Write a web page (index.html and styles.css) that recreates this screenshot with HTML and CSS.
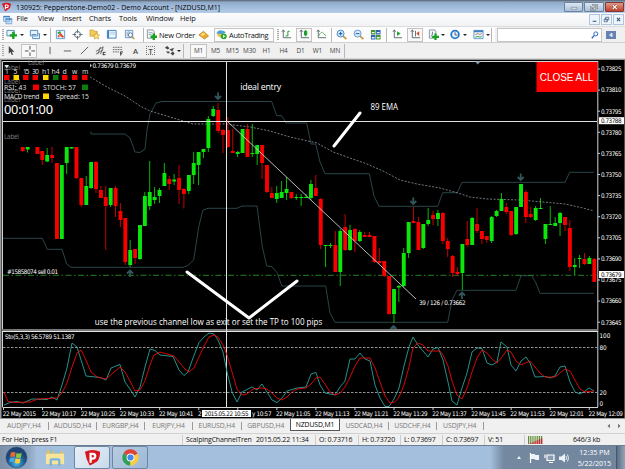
FILE: index.html
```html
<!DOCTYPE html>
<html lang="en">
<head>
  <meta charset="UTF-8">
  <title>130925: Pepperstone-Demo02 - Demo Account - [NZDUSD,M1]</title>
  <link rel="stylesheet" href="styles.css">
</head>
<body>
  <div class="window">
    <header class="title-bar">
      <svg class="app-icon" viewBox="0 0 10 10"><path fill="#d8141f" d="M0 1.5Q5-.8 10 1.5L8.8 6 3.5 10Z"/><path fill="none" stroke="#fff" stroke-width="1.3" d="M3.8 7.5V2.8h1.7q1.6.1 1.4 1.5T5.200 5.700H4"/></svg>
      <svg class="title" viewBox="0 0 240 13"><text x="0" y="9.500" textLength="204" lengthAdjust="spacingAndGlyphs">130925: Pepperstone-Demo02 - Demo Account - [NZDUSD,M1]</text></svg>
      <div class="window-buttons">
        <svg viewBox="0 0 18 10"><path fill="#fff" stroke="#4d5b6b" stroke-width=".6" d="M6 5.500h7v2H6z"/></svg>
        <svg viewBox="0 0 18 10"><path fill="none" stroke="#4d5b6b" stroke-width="1.800" d="M8 2.500h5v4H8zM5.500 4.500h5v4h-5z"/><path fill="none" stroke="#fff" stroke-width=".8" d="M8 2.500h5v4H8zM5.500 4.500h5v4h-5z"/></svg>
        <svg class="close" viewBox="0 0 18 10"><path stroke="#7a2a20" stroke-width="2.600" d="M6.500 2.500l5 5m0-5l-5 5"/><path stroke="#fff" stroke-width="1.500" d="M6.500 2.500l5 5m0-5l-5 5"/></svg>
      </div>
    </header>

    <nav class="menu-bar">
      <svg viewBox="0 0 12 12"><path fill="#cfe3f7" stroke="#6f9fd0" d="M.8 1.500h7v6h-7zM3.500 4.500h7v6h-7z"/><path stroke="#4682c2" stroke-width="1.500" d="M.5 1.800h7.500M3 4.800h8"/></svg>
      <span>File</span><span>View</span><span>Insert</span><span>Charts</span><span>Tools</span><span>Window</span><span>Help</span>
      <div class="child-buttons">
        <svg viewBox="0 0 10 10"><path stroke="#36587e" stroke-width="1.200" d="M3 7h4"/></svg>
        <svg viewBox="0 0 10 10"><path fill="none" stroke="#36587e" stroke-width=".8" d="M4 2.500h3.500v3H4zM2.500 4.500H6v3H2.500z"/></svg>
        <svg viewBox="0 0 10 10"><path stroke="#36587e" stroke-width="1.200" d="M3.300 3.300l3.500 3.500m0-3.500l-3.500 3.500"/></svg>
      </div>
    </nav>

    <div class="toolbar main-tools">
      <i class="grip"></i>
      <svg viewBox="0 0 12 12"><path fill="#eef6fd" stroke="#4a86b8" d="M1 1.500h8v6H1z"/><path stroke="#18a021" stroke-width="2.600" d="M4 7h8M8 3v8"/></svg>
      <i class="caret"></i>
      <svg viewBox="0 0 12 12"><path fill="#e6f2fc" stroke="#4a86b8" d="M1.500 1.500h8v6h-8zM4 8v2.500h7.500V5H10"/><path stroke="#4a86b8" d="M3 6h5"/></svg>
      <i class="caret"></i>
      <i class="divider"></i>
      <svg viewBox="0 0 12 12"><path fill="#edf6fe" stroke="#5c97cf" d="M1.500 1.500h9v9h-9z"/><path stroke="#26a52c" stroke-width="2" d="M3 5l3-2"/><path stroke="#dc4a2a" stroke-width="2.200" d="M5 5l4 4M3 8h2"/></svg>
      <svg viewBox="0 0 12 12"><circle cx="6" cy="6" r="3.300" fill="none" stroke="#5b656e"/><path stroke="#5b656e" d="M6 .5v4M6 7.500v4M.5 6h4M7.500 6h4"/></svg>
      <svg viewBox="0 0 12 12"><path fill="#f5cb56" stroke="#b98d29" stroke-width=".6" d="M1 1h4l1 1.500h3V8H1z"/><path fill="#ffe27a" stroke="#b98d29" stroke-width=".6" d="M8 4l1.200 2.300 2.500.3-1.800 1.800.4 2.600L8 9.800 5.700 11l.4-2.600-1.800-1.800 2.500-.3z"/></svg>
      <svg viewBox="0 0 12 12"><path fill="#eff7fe" stroke="#3f7fc0" d="M1.500 1.500h9.500v8.500H1.500z"/><path stroke="#3f7fc0" stroke-width="1.800" d="M2.500 2v8"/><path stroke="#a8c8e6" d="M4.500 3.500H10M4.500 5.500H10"/></svg>
      <svg viewBox="0 0 12 12"><path fill="#e7f1fa" stroke="#6b95bd" d="M1.500 1.500h8v8h-8z"/><path stroke="#8aa7c0" d="M3.500 3v5M5.500 2v4"/><circle cx="7" cy="6.500" r="2.300" fill="#fff" stroke="#55789b"/><path stroke="#c7973c" stroke-width="1.500" d="M8.800 8.300l2.500 2.700"/></svg>
      <i class="divider"></i>
      <span class="labelled new-order"><svg viewBox="0 0 12 12"><path fill="#f4f6f8" stroke="#8293a4" d="M1.500 1h6l1.500 2v7H1.500z"/><path stroke="#8fa6ba" d="M3 4h4M3 6h3"/><path stroke="#18a021" stroke-width="2.600" d="M5 8.500h7M8.500 5v7"/></svg>New Order</span>
      <svg viewBox="0 0 12 12"><path fill="#e9ac28" stroke="#a97514" stroke-width=".7" d="M1 6.500l5-4 5.500 5L7 11z"/><path fill="#ffe086" d="M2.800 6.200L6 3.700l2 2-3.500 2z"/></svg>
      <span class="labelled auto-trading"><svg viewBox="0 0 12 12"><path fill="#edc145" d="M1 5l4-1 5 2-3 4-5-2z"/><path fill="#4aa0d8" d="M.5 5Q2 1 6 1.500T10.500 4Q7 6 .5 5z"/><circle cx="8.500" cy="8" r="3.200" fill="#22a82a"/><path fill="#fff" d="M7.600 6.300v3.400L10.300 8z"/></svg>AutoTrading</span>
      <i class="grip"></i>
      <svg viewBox="0 0 12 12"><path fill="none" stroke="#59656c" d="M2.500 1v8.500H11M1 3l1.500-2L4 3"/><path fill="none" stroke="#159528" d="M5 7.500h2.500V2.500H9.500"/></svg>
      <span class="pressed"><svg viewBox="0 0 12 12"><path fill="none" stroke="#59656c" d="M2.500 1v8.500H11M1 3l1.500-2L4 3"/><path fill="#3bd04b" stroke="#159528" d="M6 2.500h2.500v4H6zM7.200 1v7"/></svg></span>
      <svg viewBox="0 0 12 12"><path fill="none" stroke="#59656c" d="M2.500 1v8.500H11M1 3l1.500-2L4 3"/><path fill="none" stroke="#59a865" d="M3 7.500q3-6 5-3T11 7"/></svg>
      <i class="divider"></i>
      <svg viewBox="0 0 12 12"><path stroke="#c89b3a" stroke-width="2" d="M7.800 7.800L11.300 11"/><circle cx="5" cy="5" r="3.800" fill="#d8ecfb" stroke="#3f7fc0"/><path stroke="#2e6fb4" stroke-width="1.200" d="M3 5h4M5 3v4"/></svg>
      <svg viewBox="0 0 12 12"><path stroke="#c89b3a" stroke-width="2" d="M7.800 7.800L11.300 11"/><circle cx="5" cy="5" r="3.800" fill="#d8ecfb" stroke="#5a96cf"/><path stroke="#2e6fb4" stroke-width="1.200" d="M3 5h4"/></svg>
      <svg viewBox="0 0 12 12"><path fill="#47952c" d="M1 1h5v5H1zM6.500 6.500h5v5h-5z"/><path fill="#2c66bb" d="M6.500 1h5v5h-5zM1 6.500h5v5H1z"/><path stroke="#e9f3ff" stroke-width="1.500" d="M2 4h3M7.500 4h3M2 9.500h3M7.500 9.500h3"/></svg>
      <i class="divider"></i>
      <svg viewBox="0 0 12 12"><path fill="none" stroke="#59656c" d="M2.500 1v8.500H11M1 3l1.500-2L4 3"/><path fill="#22a432" d="M5.500 2.500v5l4-2.500z"/></svg>
      <span class="pressed"><svg viewBox="0 0 12 12"><path fill="none" stroke="#59656c" d="M2.500 1v8.500H11M1 3l1.500-2L4 3M6 2v6"/><path fill="#d64525" d="M7 5l3-2.500v5z"/></svg></span>
      <svg viewBox="0 0 12 12"><path fill="#f4f6f8" stroke="#8293a4" d="M1.500 1h6l1 1.500V10h-7z"/><path fill="none" stroke="#5b7590" d="M3 8q2 0 2-5"/><path stroke="#18a021" stroke-width="2.400" d="M4.500 8.500H12M8.200 5v7"/></svg>
      <i class="caret"></i>
      <svg viewBox="0 0 12 12"><circle cx="5.500" cy="6" r="4.200" fill="#e7f4ff" stroke="#2b78c6" stroke-width="2"/><path fill="none" stroke="#365a80" d="M5.500 3.500V6.500H8"/></svg>
      <i class="caret"></i>
      <svg viewBox="0 0 12 12"><path fill="#eaf5ff" stroke="#5c97cf" d="M1 1.500h10v9H1z"/><path stroke="#3f7fc0" stroke-width="2" d="M1 2.500h10"/><path fill="none" stroke="#c37c4a" d="M2.500 6l3-1 2 1 2-1"/><path fill="none" stroke="#36a044" d="M2.500 9l3-1 2 1 2-1"/></svg>
      <i class="caret"></i>
      <i class="divider"></i>
      <span class="search"><svg viewBox="0 0 10 10"><circle cx="6" cy="3.600" r="2.500" fill="none" stroke="#2f66bd" stroke-width="1.200"/><path stroke="#2f66bd" stroke-width="1.700" d="M4.300 5.500L1 9"/></svg></span>
      <span class="chat">4</span>
    </div>

    <div class="toolbar draw-tools">
      <i class="grip"></i>
      <svg viewBox="0 0 12 12"><path fill="#444" d="M3 1v8.500l2-1.800L6.300 11l1.500-.7L6.400 7.300h2.800z"/></svg>
      <span class="pressed"><svg viewBox="0 0 12 12"><path stroke="#444" d="M6.500 1v4M6.500 8v4M1 6.500h4M8 6.500h4"/></svg></span>
      <svg viewBox="0 0 12 12"><path stroke="#555" d="M5.500 2v8"/></svg>
      <svg viewBox="0 0 12 12"><path stroke="#555" d="M2 6.500h8"/></svg>
      <svg viewBox="0 0 12 12"><path stroke="#555" d="M2 10l8-8"/></svg>
      <svg viewBox="0 0 12 12"><path stroke="#555" stroke-width=".9" d="M1 7l8-5M1 10l8-5M3 10l3-8M6 10l3-8"/><path stroke="#333" d="M8.500 8h3M8.500 10.500h3M9 8v3"/></svg>
      <svg viewBox="0 0 12 12"><path stroke="#555" stroke-dasharray="1.200 .6" d="M1 2.500h10M1 5h10M1 7.500h7"/><path stroke="#333" d="M9 7.500h3M9 9.500h2M9.500 7.500v4"/></svg>
      <b>A</b>
      <b class="boxed">T</b>
      <svg viewBox="0 0 12 12"><path fill="#444" d="M1 3l2.500-2L6 3.500 4 5zM7 9l3-2 1.500 2.500-2 2zM6 5l5-2-2 4zM2 7h4v2H4z"/></svg>
      <i class="caret"></i>
      <i class="divider"></i>
      <em class="active">M1</em><em>M5</em><em>M15</em><em>M30</em><em>H1</em><em>H4</em><em>D1</em><em>W1</em><em>MN</em>
      <i class="divider"></i>
    </div>

    <svg class="chart" viewBox="0 59 625 360">
      <rect class="frame" x="0" y="59" width="625" height="360"/>
      <rect x="1.500" y="60" width="623" height="358"/>
      <path class="border" d="M2.500 407V61.500H598M597.800 61v346M2.500 407.500H598"/>
      <path stroke="#777" stroke-width="2" d="M2 330h596"/>
      <path stroke="#e4e4e4" stroke-width="1" d="M2 331.500h596"/>

      <path class="channel" d="M90.700 131.500l.3 2.500H125l5 4 5 14 5 .5 5-3.500 2-19 3-16 6-11 6-1.500H271.700l5 14.200h5l4.400 7.300H306.700l4.300 21h4.700l4.300 18 5 11.700H369.300l4.700 22.300 5 10.300H437.700l5-13.600H457.300l4.700-10.400H565l4.700-10H594"/>
      <path class="channel" d="M3 238.300H42.300l5 11H62l4.700 14.700 4.300 3.300H183l5-1.800 5.700-5.500 5-33.300 4.300-16.700 5-1.700H237l5-2.300H257l5.300 40.700 4.400 19.300 5.300.7 5 6 5 13.300H325.700l4.300 27 5 9.300H447.700l4.300-22.300 5-9.700H516l5-14.600H531.700l4.300 7.300 4 10.300H594"/>
      <polyline class="ema" points="90,77 107,87 125,96 140,106 150,111 170,117 193,124 225,124 250,127 270,131 290,137 317,143 333,152 350,158 367,164 383,171 400,180 417,184 440,188 458,193 470,197 487,199 520,200 543,202 565,204 583,208 594,211"/>
      <path stroke="#238023" stroke-dasharray="6 2.500 1.500 2.500" d="M3 275.300H597"/>

      <g id="candles"></g>

      <g id="arrows"></g>

      <path class="cross" d="M3 121.500H597M226.500 62V407"/>
      <path stroke="#ccc" stroke-width=".9" d="M227 121L416 299"/>
      <path class="marker" d="M360 113L334 146M187 272L249 318M249 318L297 281"/>
      <path fill="#7f93a5" d="M475 61.500h5.500l-2.700 3z"/>

      <rect x="536.500" y="62" width="61" height="30" fill="#fe0000"/>
      <text class="close-all" x="539.800" y="80.600" textLength="53.500">CLOSE ALL</text>

      <g class="dim">
        <text x="4" y="70">Label</text><text x="28" y="65" fill="#aaa">Label</text>
        <text x="4" y="84">Label</text><text x="4" y="93">Label</text>
        <text x="4" y="102">Label</text><text x="4" y="139" textLength="15">Label</text>
      </g>
      <path fill="#e8e8e8" d="M4.500 65h4.500l-2.200 3.500z"/>
      <text class="small" x="92.500" y="68.300" textLength="43.500">0.73679 0.73679</text>
      <path fill="#eee" d="M90.200 63.500l1.500 2-1.500 2z"/>
      <g class="panel">
        <text x="5" y="73.600">1</text><text x="13.500" y="73.600">5</text><text x="23" y="73.600" textLength="6.500">15</text>
        <text x="32" y="73.600" textLength="7">30</text><text x="42" y="73.600">h1</text><text x="51.500" y="73.600">h4</text>
        <text x="62.500" y="73.600">d</text><text x="72" y="73.600">w</text><text x="82" y="73.600">m</text>
        <text x="4" y="90" textLength="22.500">RSI: 43</text><text x="43" y="90" textLength="33">STOCH: 57</text>
        <text x="4" y="99.200" textLength="35.500">MACD trend</text><text x="56" y="99.200" textLength="33">Spread: 15</text>
        <text class="timer" x="4" y="114.300" textLength="49">00:01:00</text>
      </g>
      <path fill="#f40000" d="M4 75h5.500v5H4zM23 75h5.500v5H23zM32.500 75H38v5h-5.500zM62 75h5.500v5H62zM72 75h5.500v5H72zM82 75h5.500v5H82zM33 84.500h6v5.500h-6z"/>
      <path fill="#ffd800" d="M13.500 75H19v5h-5.500zM43 75h5.500v5H43zM43 93.500h6V99h-6z"/>
      <path fill="#0a7d0a" d="M53 75h5.500v5H53zM82 84.500h6v5.500h-6z"/>

      <text class="note" x="240.300" y="90" textLength="41">ideal entry</text>
      <text class="note" x="370.500" y="110.200" textLength="27.500" lengthAdjust="spacingAndGlyphs">89 EMA</text>
      <text class="note" x="94.800" y="325.200" textLength="227.500" lengthAdjust="spacingAndGlyphs">use the previous channel low as exit or set the TP to 100 pips</text>
      <text class="small" x="419" y="305" textLength="46.500">39 / 126 / 0.73662</text>
      <text class="small" x="7" y="273.800" textLength="51">#15858074 sell 0.01</text>
      <text class="small" x="5" y="339" textLength="69.500">Sto(5,3,3) 56.5789 51.1387</text>

      <path class="level" d="M3 347.500H597M3 392.500H597"/>
      <polyline class="stoch-main" points="4,405 10,402.500 17,401.500 23,403 32,399 47,399.500 52,397 57,400 62,385 67,368 72,343 77,347 82,363 86,376 100,377.500 106,380 111,368 116,366 120,364.500 125,382 130,389 135,397 140,387 145,367 150,349 155,350.500 160,355 173,356.500 179,370 184,375.500 188,372 193,358 199,342.500 204,337 209,333 214,334 218,340 223,352 227,372 232,392 237,402 242,392 252,387 257,390 262,384 267,392 272,400 277,402.500 282,398 287,391 297,388 306,387 311,374 316,372.500 320,385 325,393 335,395 340,387 345,381 350,359 355,359 360,353 365,359 370,361 375,385 380,398 385,406.500 389,406.500 394,399 399,388 404,366 409,347 413,337 418,345 428,357 433,349 438,347.500 443,360 448,382 452,401 457,405 462,388 467,373 472,352 477,348 482,348.500 487,363 492,365 497,362 501,342 507,347 511,365 516,371 521,361 526,357 530,363 535,377 545,376.500 550,378 555,376 560,367 565,366 570,382 575,392 580,394 585,391 589,388 594,391"/>
      <polyline class="stoch-signal" points="4,392 8,401.500 15,402.500 30,402 38,399 57,398 62,393 67,383 72,367 77,353 81,350 86,360 91,372 97,377 106,379 113,373 120,367 125,372 130,381 135,391 140,390 145,381 150,365 154,355 160,352 174,356 179,362 185,369 189,372 194,368 199,357 204,346 209,337 214,335 218,337 223,345 227,355 232,372 237,389 242,395 247,394 253,389 262,388 267,389 272,393 277,398 282,400 287,397 292,392 297,389 306,388 311,384 316,378 320,377 325,384 330,392 335,395 340,393 345,387 350,377 355,366 360,358 370,358 375,368 380,382 385,396 390,403 395,402 399,397 404,385 409,367 413,348 418,343 423,345 428,351 440,351 443,355 448,366 452,381 457,395 462,399 467,388 472,372 477,358 482,350 487,353 492,359 497,363 502,357 507,350 511,352 516,361 521,365 530,361 535,367 540,373 545,377 555,377 560,373 565,369 570,371 575,380 580,389 585,392 594,391"/>

      <g id="axes"></g>
    </svg>

    <div class="tabs">
      <span>AUDJPY,H4</span><span>AUDUSD,H4</span><span>EURGBP,H4</span><span>EURJPY,H4</span><span>EURUSD,H4</span><span>GBPUSD,H4</span><span class="active">NZDUSD,M1</span><span>USDCAD,H4</span><span>USDCHF,H4</span><span>USDJPY,H4</span>
      <i class="tab-arrows"><svg viewBox="0 0 14 6"><path fill="#777" d="M3 .8v4.400L.5 3zM11 .8v4.400L13.500 3z"/></svg></i>
    </div>

    <div class="status-bar">
      <span>For Help, press F1</span>
      <span>ScalpingChannelTren</span>
      <span class="plain">2015.05.22 11:34</span>
      <span>O: 0.73716</span>
      <span>H: 0.73720</span>
      <span>L: 0.73697</span>
      <span>C: 0.73697</span>
      <span>V: 51</span>
      <span><svg viewBox="0 0 15 8"><path stroke="#5f8b33" stroke-width="8" stroke-dasharray="1.500 .6" d="M0 4h15"/><path fill="#b5332c" d="M0 8l15-6v6z"/><path stroke="#f0f0f0" stroke-width="8" stroke-dasharray=".6 1.500" stroke-dashoffset=".6" d="M0 4h15"/></svg></span>
      <span class="plain">646/3 kb</span>
    </div>
  </div>

  <footer class="taskbar">
    <div class="start">
      <svg viewBox="0 0 24 24"><defs><radialGradient id="orb" cy=".75"><stop offset="0" stop-color="#4fc3ea"/><stop offset=".6" stop-color="#216ba6"/><stop offset="1" stop-color="#1d4474"/></radialGradient></defs><circle cx="12" cy="12" r="11" fill="url(#orb)" stroke="#385878" stroke-width=".6"/><path fill="#ee6a2c" d="M6 7q2.500-1.500 5-.2l-.8 4.700q-2.500-1-4.800.2z"/><path fill="#8cc63e" d="M12 7.200q2.500 1.300 5.500 0l-1 4.800q-2.500 1.200-5.200-.2z"/><path fill="#47a9e6" d="M5.200 12.700q2.500-1.200 4.800-.2l-.8 4.500q-2-1-4.700.2z"/><path fill="#fbcc35" d="M11.100 12.800q2.600 1.300 5.200.2l-1 4.700q-2.500 1-5-.3z"/></svg>
    </div>
    <div class="task explorer">
      <svg viewBox="0 0 22 20"><path fill="#e7bd55" d="M2 2h6l1 2h10v13H2z"/><path fill="#8cc0df" d="M5 1h3v5H5zM10 3h6v3h-6z"/><path fill="#fae49a" d="M1 6h19v11H1z"/><path fill="none" stroke="#72b4df" stroke-width="2.300" d="M6 19v-6q0-1 1-1h7q1 0 1 1v6"/></svg>
    </div>
    <div class="task open">
      <svg viewBox="0 0 18 18"><path fill="#d9151e" d="M1 3Q9-.8 17 3q0 7-3 10-4 3-8 4.500Q2 11 1 3z"/><path fill="none" stroke="#fff" stroke-width="2.400" d="M7 14.500V5.200h2.500q2.700.2 2.400 2.500t-3 2.500H7"/></svg>
    </div>
    <div class="task open chrome">
      <svg viewBox="0 0 18 18"><path fill="#dc4437" d="M9 9L1.600 4.500A8.500 8.500 0 0 1 16.500 5z"/><path fill="#fccd3a" d="M9 9l7.500-4A8.500 8.500 0 0 1 8.500 17.500z"/><path fill="#2e9f55" d="M9 9l-.5 8.500A8.500 8.500 0 0 1 1.600 4.500z"/><circle cx="9" cy="9" r="4.200" fill="#fff"/><circle cx="9" cy="9" r="3.300" fill="#4688ec"/></svg>
    </div>
    <div class="tray">
      <svg viewBox="0 0 56 12"><path fill="#edf3f8" d="M3 7l2-3 2 3z"/><path stroke="#fff" stroke-width="1.200" d="M16.500 1v10"/><path fill="#edf3f8" d="M17 2h3.500l1 1H25v5h-3.500l-1-1H17z"/><path fill="#8a9db0" stroke="#fff" stroke-width="1.200" d="M33 3h7v5.500h-7zM31 2.500V6M35 10.500h4"/><path fill="#edf3f8" d="M45 4.500h2.500L51 1.500v9L47.500 8H45z"/><path fill="none" stroke="#edf3f8" stroke-width=".9" d="M52 4q1 2 0 4M53.500 2.500q2 3.500 0 7"/></svg>
      <div class="clock">12:35 PM<br>5/22/2015</div>
      <div class="show-desktop"></div>
    </div>
  </footer>

  <script src="chart.js"></script>
</body>
</html>
```
FILE: styles.css
```css
* {
  box-sizing: border-box;
}
body {
  margin: 0;
  width: 625px;
  height: 469px;
  overflow: hidden;
  font-family: "Open Sans", "Noto Sans", sans-serif;
  font-size: 7.4px;
  line-height: 10px;
  color: #111;
  background: #f0f0f0;
}
svg {
  display: block;
}
.title-bar {
  display: flex;
  align-items: center;
  height: 13px;
  padding-left: 2px;
  background: linear-gradient(#56606c 0, #8ea8c6 2px, #9ab5d6 5px, #b4cce8 13px);
}
.app-icon {
  width: 9px;
  height: 10px;
}
.title {
  width: 240px;
  height: 13px;
  margin-left: 5px;
  margin-right: auto;
  font-size: 7.8px;
}
.window-buttons {
  display: flex;
  gap: 1px;
  padding-right: 1px;
}
.window-buttons svg {
  width: 19.5px;
  height: 10px;
  border: 1px solid #6d8098;
  border-radius: 1px;
  background: linear-gradient(#dce7f3, #a9bfd8);
}
.window-buttons .close {
  background: linear-gradient(#e39a87, #c3402a);
  border-color: #7b3a35;
}
.menu-bar {
  display: grid;
  grid-template-columns: 14px 21.5px 24px 27px 30px 27px 34px 1fr auto;
  align-items: center;
  height: 13px;
  padding-left: 2.5px;
  letter-spacing: -0.08px;
  background: linear-gradient(#fcfcfd, #f1f2f4);
}
.menu-bar > svg {
  width: 10px;
  height: 10px;
}
.menu-bar span {
  line-height: 9px;
  margin-top: -2px;
}
.child-buttons {
  display: flex;
  gap: 1px;
  padding-right: 1px;
}
.child-buttons svg {
  width: 11px;
  height: 11px;
  border: 1px solid #b0c4da;
  background: #edf4fb;
}
.toolbar {
  display: grid;
  align-items: center;
  background: #f0f0f0;
}
.toolbar svg {
  width: 11px;
  height: 11px;
}
.main-tools {
  height: 17px;
  border-top: 1px solid #dcdcdc;
  border-bottom: 1px solid #d0d0d0;
  grid-template-columns: 6px 14px 9px 14px 7px 5px 17px 17px 17px 18px 19px 3px 52px 13px 64px 6px 15px 20px 15px 5px 17px 17px 16px 6px 15px 21px 13px 9px 13px 10px 13px 5px 6px 105px 1fr;
  background: linear-gradient(90deg, #fdfdfd 495px, #f0f0f0 495px);
}
.draw-tools {
  height: 16px;
  border-bottom: 1px solid #d5d5d5;
  grid-template-columns: 6px 15px 24px 17px 17px 16px 17px 18px 16px 18px 13px 6px 7px 17px 17px 17px 17px 17px 17px 17px 17px 18px 3px;
}
.grip {
  width: 2px;
  height: 11px;
  margin-left: 2px;
  background: repeating-linear-gradient(#aaa 0 1px, #eee 1px 2px);
}
.divider {
  width: 1px;
  height: 14px;
  background: #b8b8b8;
}
.caret {
  width: 0;
  border: 2px solid transparent;
  border-top-color: #222;
  border-bottom: 0;
}
.labelled {
  display: flex;
  align-items: center;
  gap: 2px;
  white-space: nowrap;
}
.new-order {
  letter-spacing: -0.2px;
}
.auto-trading {
  width: 60px;
  height: 14px;
  margin-left: 3px;
  padding-left: 1px;
  letter-spacing: -0.28px;
  border: 1px solid #c4c4c4;
}
.pressed {
  display: flex;
  align-items: center;
  justify-content: center;
  width: 16px;
  height: 14px;
  border: 1px solid #c2c2c2;
  background: #f8f8f8;
}
.search {
  display: flex;
  align-items: center;
  justify-content: flex-end;
  height: 14px;
  padding-right: 2px;
  border: 1px solid #c6c6c6;
  background: #fff;
}
.toolbar .search svg {
  width: 8px;
  height: 8px;
}
.chat {
  width: 10px;
  height: 8px;
  margin-left: 4px;
  font-size: 6px;
  line-height: 8px;
  font-weight: bold;
  text-align: center;
  color: #fff;
  background: #6682b5;
}
.draw-tools b {
  font-size: 7.5px;
  font-weight: 600;
  color: #444;
  padding-left: 3px;
}
.draw-tools .boxed {
  width: 9px;
  height: 9px;
  padding: 0;
  line-height: 8px;
  text-align: center;
  border: 1px dotted #777;
}
.draw-tools em {
  font-style: normal;
  font-size: 6.4px;
  letter-spacing: -0.1px;
  text-align: center;
  color: #444;
}
.draw-tools em.active {
  height: 14px;
  line-height: 12px;
  border: 1px solid #c2c2c2;
  background: #f8f8f8;
}

/* chart */
.chart {
  width: 625px;
  height: 360px;
}
.chart text {
  fill: #fff;
}
.frame {
  fill: #9a9a9a;
}
.border {
  fill: none;
  stroke: #d4d4d4;
}
.channel {
  fill: none;
  stroke: #2b4549;
  stroke-width: 1;
}
.ema {
  fill: none;
  stroke: #8b97a2;
  stroke-width: 0.8;
  stroke-dasharray: 2 1.5;
}
.cross {
  stroke: #e2e2e2;
}
.marker {
  stroke: #fff;
  stroke-width: 3;
  stroke-linecap: round;
}
.level {
  stroke: #b9b9b9;
  stroke-width: 0.8;
  stroke-dasharray: 2.5 1.5;
}
.stoch-main,
.stoch-signal {
  fill: none;
  stroke: #27a29a;
  stroke-width: 0.9;
}
.stoch-signal {
  stroke: #ee0808;
}
.up {
  fill: #0be60b;
  stroke: #0be60b;
}
.down {
  fill: #f80000;
  stroke: #f80000;
}
.wick {
  stroke-width: 0.8;
}
.body {
  stroke: none;
}
.arrow {
  fill: none;
  stroke: #33565d;
  stroke-width: 1.8;
}
.small {
  font: 6.3px "DejaVu Sans Condensed", "DejaVu Sans", sans-serif;
}
.panel text {
  font: 6.8px "Noto Sans", sans-serif;
  fill: #ddd;
}
.panel .timer {
  font-size: 12.8px;
  fill: #fff;
}
.chart .dim text {
  font: 6.4px "Noto Sans", sans-serif;
  fill: #777;
}
.note {
  font: 8.9px "Open Sans", sans-serif;
}
.close-all {
  font: 10px "Liberation Sans", Arial, sans-serif;
}
.chart .inverse {
  fill: #000;
}

.tabs {
  display: grid;
  grid-template-columns: 49px 48px 48px 48px 48.5px 48.5px 50px 49px 48px 46.5px 1fr;
  height: 15px;
  border-bottom: 1px solid #d2d2d2;
  align-items: center;
  color: #777;
  font-size: 6.8px;
  letter-spacing: -0.08px;
}
.tabs span {
  text-align: center;
  line-height: 8px;
  border-right: 1px solid #999;
}
.tabs span:nth-child(6) {
  border: 0;
}
.tabs .active {
  align-self: start;
  height: 12px;
  line-height: 11px;
  color: #000;
  background: #fff;
  border: 1px solid #555;
  border-top: 0;
}
.tab-arrows svg {
  width: 14px;
  height: 6px;
  margin-left: auto;
  margin-right: 4px;
}
.status-bar {
  display: grid;
  grid-template-columns: 182px 71px 62px 43px 42px 42px 42px 41px 45px 1fr;
  align-items: center;
  height: 11px;
  font-size: 7px;
  letter-spacing: -0.17px;
}
.status-bar span {
  padding-left: 3px;
  height: 10px;
  line-height: 10px;
  border-left: 1px solid #ccc;
  white-space: nowrap;
}
.status-bar span:first-child {
  padding-left: 2px;
}
.status-bar span:first-child,
.status-bar .plain {
  border: 0;
}
.status-bar svg {
  width: 15px;
  height: 8px;
  margin-top: 1px;
}
.status-bar span:nth-child(9) {
  margin-left: -1px;
}
.taskbar {
  display: flex;
  height: 24px;
  border-top: 1px solid #6c7e93;
  background: #a4bfdd;
}
.start {
  width: 37px;
  padding-left: 5px;
  background: linear-gradient(90deg, #7c90a8, #8fa7c2 80%, #a4bfdd);
}
.start svg {
  width: 23px;
  height: 23px;
}
.task {
  display: flex;
  align-items: center;
  justify-content: center;
  width: 37px;
}
.task svg {
  width: 17px;
  height: 17px;
}
.task.explorer svg {
  width: 21px;
  height: 19px;
}
.task.open {
  width: 36px;
  margin-right: 2px;
  border: 1px solid #6f87a3;
  border-radius: 2px;
  background: linear-gradient(135deg, #e8eff7, #c9daec);
}
.task.chrome {
  background: linear-gradient(135deg, #b8cce2, #9cb8d6);
}
.tray {
  display: flex;
  align-items: center;
  width: 135px;
  margin-left: auto;
  padding-left: 24px;
  background: linear-gradient(90deg, #a4bfdd, #74889f 14px, #72869e);
}
.tray svg {
  width: 56px;
  height: 12px;
}
.clock {
  flex: 1;
  padding-left: 3px;
  text-align: center;
  font-size: 7.2px;
  letter-spacing: -0.08px;
  line-height: 10.5px;
  color: #fff;
}
.show-desktop {
  width: 9px;
  height: 23px;
  border-left: 1px solid #46566a;
  background: linear-gradient(90deg, #5c6e83, #93a5b9);
}
```
FILE: chart.js
```js
const NS = 'http://www.w3.org/2000/svg';

function add(parent, tag, attrs, text) {
  const el = document.createElementNS(NS, tag);
  Object.keys(attrs).forEach(key => el.setAttribute(key, attrs[key]));
  if (text) el.textContent = text;
  parent.appendChild(el);
}

// bar index, up/down, high, body top, body bottom, low
const bars = [
  [0,'d',147,147,151,152],[1,'u',147,147,149.5,152.5],[3,'d',147,147,154,154],[4,'d',151,151,160,165],
  [5,'u',148,155,161.5,162],[6,'d',147,155,158,163],[7,'d',163,163,239,239],[8,'u',165,165,239,239],
  [9,'u',147,147,163,174],[10,'u',147,147,148.5,148.5],[11,'d',147,147,178,179],[12,'d',178,178,205,207],
  [13,'u',176,186,205,205],[14,'u',162,162,188,189],[15,'d',161,162,189,193],[16,'d',186,190,198,198],
  [17,'d',186,197,206,250],[18,'u',188,188,205,207],[19,'d',186,188,206,217],[20,'d',203,211,220,227],
  [21,'d',218,218,262,265],[22,'u',240,250,265,267],[23,'d',249,249,258,264],[24,'u',225,225,259,260],
  [25,'u',192,196,226,226],[26,'u',161,192,206,210],[27,'u',187,197,200,204],[28,'u',188,190,196,203],
  [29,'u',163,173,186,186],[30,'d',176,179,184,190],[31,'u',174,179.5,181.5,185],[32,'d',165,178,190,204],
  [33,'d',188,189,194,208.5],[34,'u',175,175,191,194],[35,'u',152,163,175,184],[36,'u',152,152,165,185],
  [37,'u',149,149,152,158],[38,'u',116,119,148,152],[39,'u',106,109,116,117],[40,'d',103,110,131,133],
  [41,'d',129,130,135,153],[42,'d',117,130,147,148],[43,'d',129,151,153,153],[44,'u',151,152,154,157],
  [45,'u',129,129,153,153],[46,'d',124,129,157,157],[47,'u',124,153,154,157],[48,'u',145,145,154,165],
  [49,'d',145,145,163,179],[50,'d',165,165,192,193],[51,'d',187,193,198,198],[52,'u',186,193,199,203],
  [53,'u',181,192,198,198],[54,'u',177,189,193,200],[55,'d',192,192,198,199],[56,'u',194,197,198,200],
  [57,'u',194,197,198,206],[58,'u',194,197,198,198],[59,'u',180,184,198,200],[60,'d',175,188,196,196],
  [61,'d',198,199,245,249],[62,'u',245,245,246,267],[63,'u',243,245,246,248],[64,'d',231,245,272,272],
  [65,'u',229,231,272,286],[66,'d',214,227,250,251],[67,'u',225,230,250,251],[68,'d',228,229,241,252],
  [69,'u',230,232,241,242],[70,'d',232,235,237,237],[71,'d',232,235,237,237],[72,'d',236,236,262,263],
  [73,'d',248,261,263,264],[74,'d',261,261,276,277],[75,'d',276,276,314,315],[76,'u',289,289,314,323],
  [77,'u',285,286,287.5,302],[78,'u',248,253,286,287],[79,'u',222,222,253,258],[80,'d',207,221,223,223],
  [81,'d',217,222,250,250],[82,'u',224,224,248,249],[83,'u',208,220,224,226],[84,'d',211,215,219,225],
  [85,'u',210,213,219,226],[86,'d',212,213,241,244],[87,'d',238,241,249,257],[88,'d',255,256,273,277],
  [89,'d',267,272,274,276],[90,'u',244,244,273,290],[91,'d',221,239,245,247],[92,'u',217,218,245,245],
  [93,'d',208,224,231,233],[94,'d',231,231,239,244],[95,'d',236,236,240,243],[96,'u',216,217,241,243],
  [97,'u',210,211,216,217],[98,'u',193,199,211,211],[99,'d',203,207,212,214],[100,'d',211,211,235,236],
  [101,'u',207,207,234,235],[102,'u',184,184,207,207],[103,'d',190,192,217,223],[104,'d',207,214,217,218],
  [105,'u',206,208,220,221],[106,'u',198,208,209,209],[107,'u',224,224,239,244],[108,'u',206,224,225,225],
  [109,'u',217,223,226,226],[110,'u',212,213,223,236],[111,'d',217,217,225,231],[112,'d',220,228,267,271],
  [113,'u',258,265,267,275],[114,'u',255,258,259,268],[115,'d',253,259,264,265],[116,'u',256,258,264,264],
  [117,'d',258,259,282,282]
];

const candles = document.getElementById('candles');
bars.forEach(([i, dir, high, top, bottom, low]) => {
  const x = 22.7 + i * 4.885;
  const g = dir === 'u' ? 'up' : 'down';
  add(candles, 'path', { class: 'wick ' + g, d: `M${x} ${high}V${low}` });
  add(candles, 'rect', { class: 'body ' + g, x: x - 1.9, y: top, width: 3.9, height: bottom - top });
});

const arrows = document.getElementById('arrows');
[[218, 96, 1], [413.3, 201, 1], [520.7, 177, 1], [130, 273.5, -1], [393.5, 329, -1], [462, 295.5, -1]].forEach(([x, y, s]) => {
  add(arrows, 'path', { class: 'arrow', d: `M${x} ${y - 3.5 * s}V${y + 3 * s}M${x - 3} ${y}L${x} ${y + 3 * s}L${x + 3} ${y}` });
});
// the arrow under the lowest bar is cut off by the pane separator
add(arrows, 'path', { stroke: '#777', 'stroke-width': 2, d: 'M388 330h12' });
add(arrows, 'path', { stroke: '#e4e4e4', d: 'M388 331.5h12' });
add(arrows, 'rect', { x: 388, y: 332, width: 12, height: 3 });

const axes = document.getElementById('axes');
for (let n = 0; n < 13; n++) {
  const y = 69 + n * 21.1;
  add(axes, 'path', { stroke: '#ccc', d: `M598 ${y}h2` });
  add(axes, 'text', { class: 'small', x: 601, y: y + 2.3, textLength: 20.5 }, (0.73825 - n * 0.00015).toFixed(5));
}
[[120.7, '0.73788'], [274.5, '0.73679']].forEach(([y, price]) => {
  add(axes, 'rect', { x: 599, y: y - 3.5, width: 25, height: 7, fill: '#fff' });
  add(axes, 'text', { class: 'small inverse', x: 601, y: y + 2.3, textLength: 20.5 }, price);
});
[[338, '100'], [349.5, '80'], [394.5, '20'], [405.7, '0']].forEach(([y, level]) => {
  add(axes, 'text', { class: 'small', x: 599.5, y: y }, level);
});

// the crosshair time box covers the labels at slots 5 and 6
['22 May 2015', '22 May 10:17', '22 May 10:25', '22 May 10:33', '22 May 10:41', '', '', '22 May 11:05',
 '22 May 11:13', '22 May 11:21', '22 May 11:29', '22 May 11:37', '22 May 11:45', '22 May 11:53', '22 May 12:01', '22 May 12:09'].forEach((time, n) => {
  const x = 2.7 + n * 39.05;
  add(axes, 'path', { stroke: '#ccc', d: `M${x + 0.8} 407v3` });
  if (time) add(axes, 'text', { class: 'small', x: x, y: 415.6, textLength: n ? 34.5 : 33.5 }, time);
});
add(axes, 'text', { class: 'small', x: 197.9, y: 415.6 }, '2');
add(axes, 'text', { class: 'small', x: 252, y: 415.6, textLength: 19.5 }, 'y 10:57');
add(axes, 'rect', { x: 202, y: 410, width: 49, height: 7, fill: '#fff' });
add(axes, 'text', { class: 'small inverse', x: 204.5, y: 415.6, textLength: 44 }, '2015.05.22 10:55');
```
